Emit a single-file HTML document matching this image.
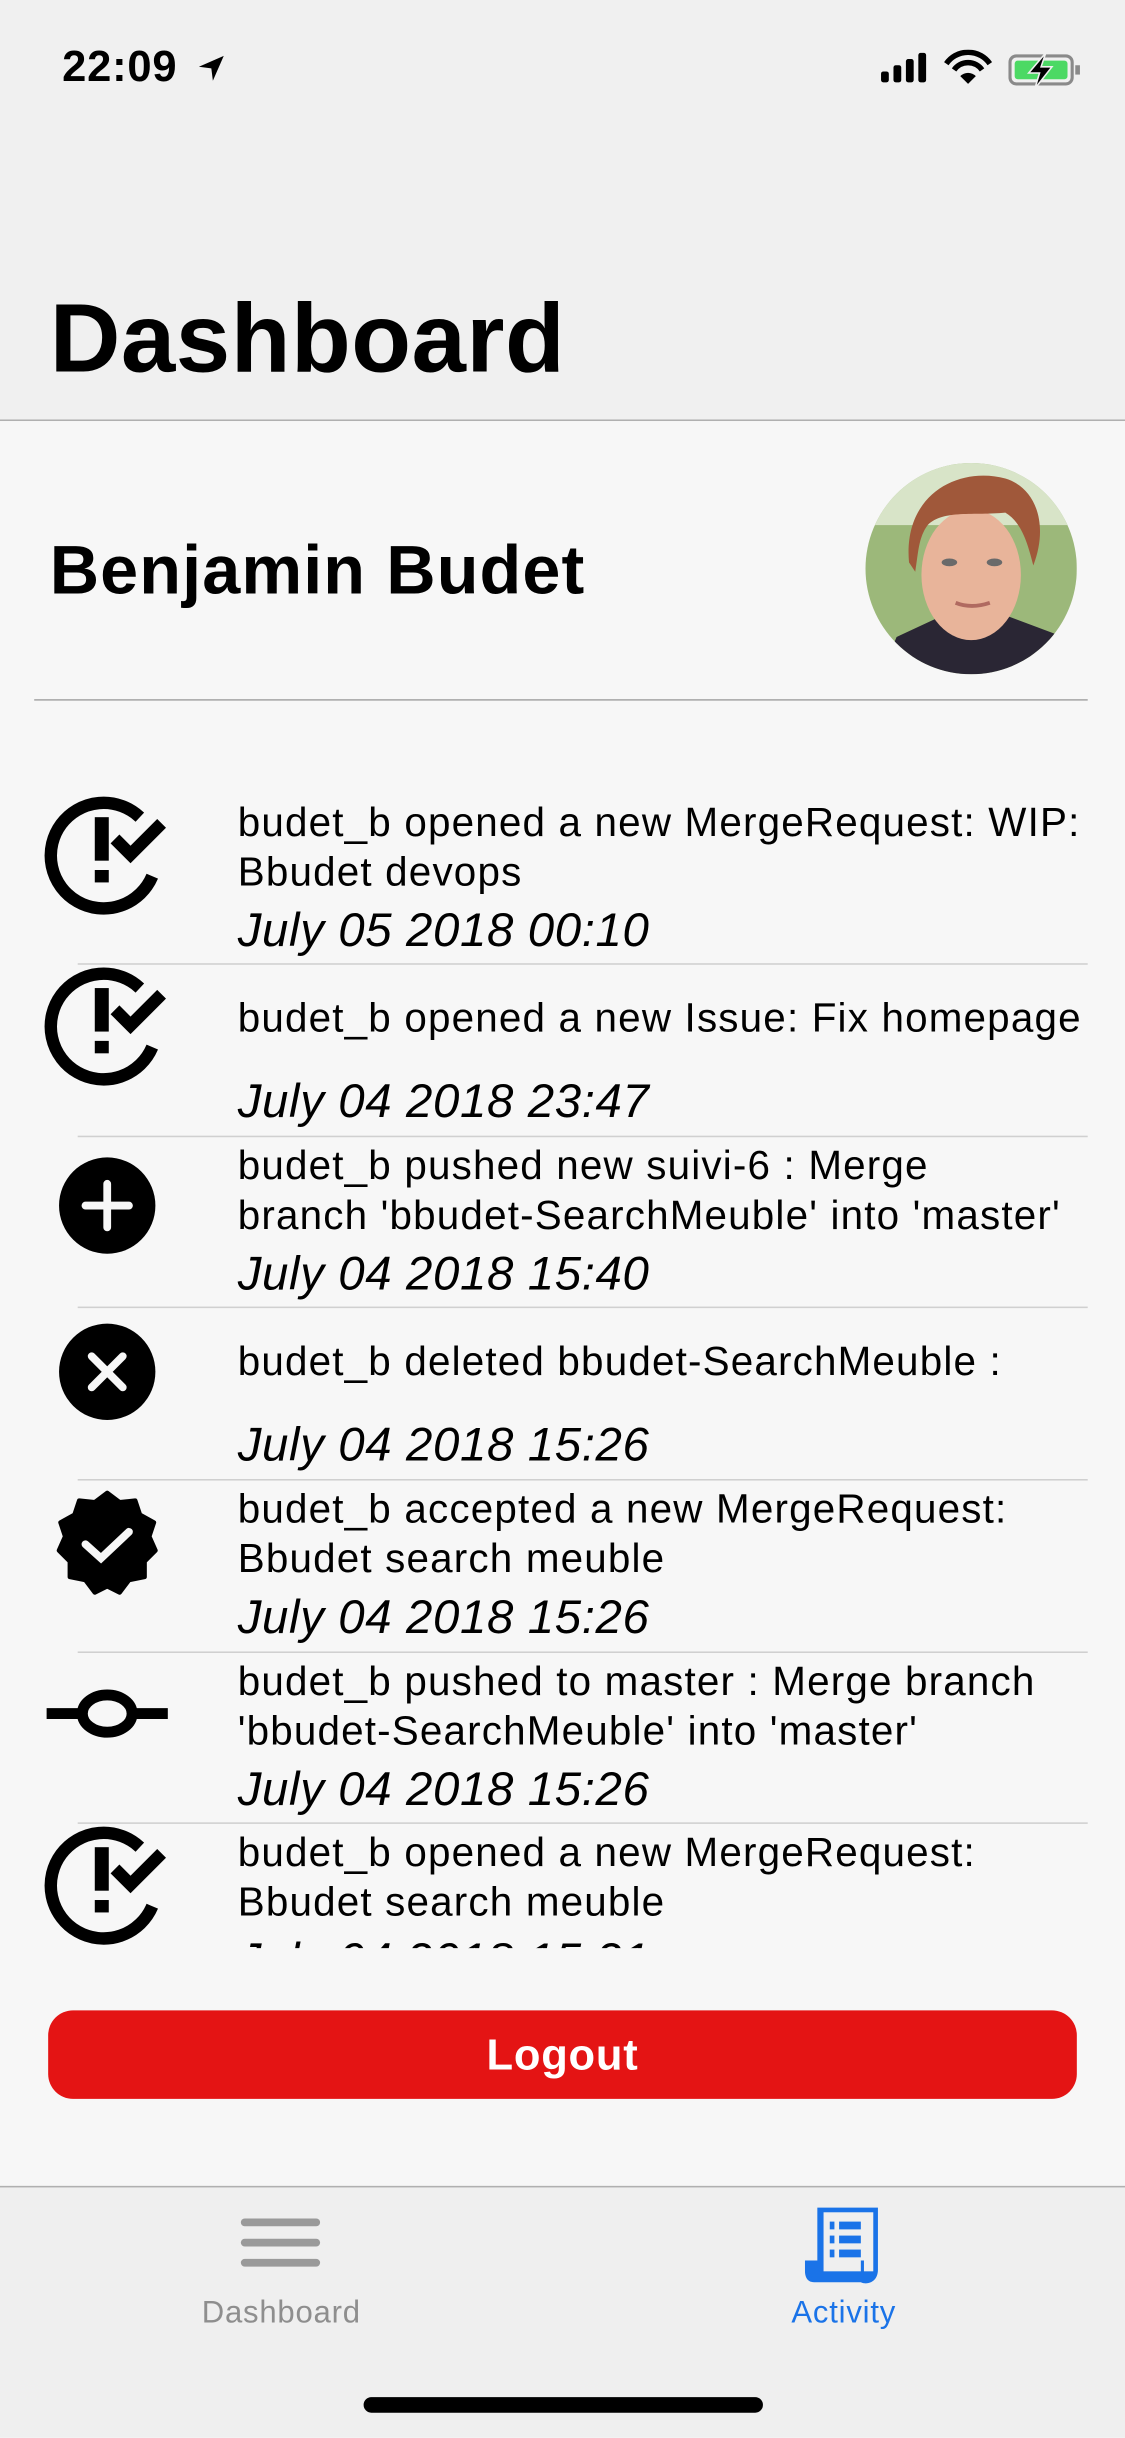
<!DOCTYPE html>
<html><head><meta charset="utf-8">
<style>
html,body{margin:0;padding:0;width:1125px;height:2436px;overflow:hidden;background:#f7f7f7}
#w{position:absolute;left:0;top:0;width:724px;height:1568px;transform:scale(1.55387,1.55357);transform-origin:0 0;font-family:"Liberation Sans",sans-serif;color:#000;background:#f7f7f7}
.abs{position:absolute}
.row{position:absolute;left:0;width:724px;height:111px}
.row .t{position:absolute;left:153px;top:1px;font-size:26px;line-height:32px;white-space:nowrap;letter-spacing:0.75px}
.row .d{position:absolute;left:153px;top:69px;font-size:30.5px;font-style:italic;line-height:36px;white-space:nowrap;letter-spacing:0.4px}
.row .sep{position:absolute;left:50px;right:24px;top:-2px;height:1px;background:#d0d0d0}
.row svg{position:absolute;left:28px;top:0}
</style></head><body>
<div id="w">
<div class="abs" style="left:0;top:0;width:724px;height:270px;background:#f0f0f0"></div>
<div class="abs" style="left:0;top:270px;width:724px;height:1px;background:#b0b0b0"></div>
<div class="abs" style="left:40px;top:27px;font-size:28px;font-weight:bold;letter-spacing:0.5px">22:09</div>
<svg class="abs" style="left:126px;top:34px" width="20" height="20" viewBox="0 0 20 20"><path d="M18 2 L2 9 L10 10 L11 18 Z" fill="#000"/></svg>
<svg class="abs" style="left:565px;top:32px" width="132" height="24" viewBox="0 0 132 24">
<rect x="2" y="14" width="5" height="7" rx="1.5"/><rect x="10" y="10" width="5" height="11" rx="1.5"/><rect x="18" y="6" width="5" height="15" rx="1.5"/><rect x="26" y="2" width="5" height="19" rx="1.5"/>
<path d="M44 9 A17 17 0 0 1 72 9" stroke="#000" stroke-width="3.5" fill="none"/><path d="M49 13 A11 11 0 0 1 67 13" stroke="#000" stroke-width="3.5" fill="none"/><path d="M53 17 L58 22 L63 17 A7 7 0 0 0 53 17Z"/>
<rect x="85" y="4" width="40" height="18" rx="4" fill="none" stroke="#8a8a8a" stroke-width="2"/><rect x="88" y="7" width="34" height="12" rx="2" fill="#4cd964"/><rect x="127" y="10" width="3" height="6" fill="#8a8a8a"/>
<path d="M108 2 L97 15 L104 15 L101 25 L112 11 L105 11 Z" fill="#000" stroke="#f0f0f0" stroke-width="1"/>
</svg>
<div class="abs" style="left:32px;top:180px;font-size:63px;font-weight:bold;line-height:76px;letter-spacing:0.3px">Dashboard</div>
<div class="abs" style="left:32px;top:342px;font-size:44px;font-weight:bold;line-height:52px;letter-spacing:0.7px">Benjamin Budet</div>
<svg class="abs" style="left:557px;top:298px" width="136" height="136" viewBox="0 0 136 136">
<defs><clipPath id="c"><circle cx="68" cy="68" r="68"/></clipPath></defs>
<g clip-path="url(#c)">
<rect width="136" height="136" fill="#9cb87a"/>
<rect x="0" y="0" width="136" height="40" fill="#d8e4c8"/>
<path d="M10 136 L20 112 L50 98 L90 98 L122 110 L136 136Z" fill="#2a2634"/>
<ellipse cx="68" cy="72" rx="32" ry="42" fill="#e8b49a"/>
<path d="M28 64 C24 20 60 2 90 10 C110 16 118 40 108 66 C104 50 100 38 90 32 C70 34 50 30 40 40 C34 48 34 58 32 70Z" fill="#a0583a"/>
<ellipse cx="54" cy="64" rx="5" ry="2.5" fill="#6a6a6a"/><ellipse cx="83" cy="64" rx="5" ry="2.5" fill="#6a6a6a"/>
<path d="M58 90 Q68 94 80 90" stroke="#b06a60" stroke-width="2.5" fill="none"/>
</g></svg>
<div class="abs" style="left:22px;top:450px;width:678px;height:1px;background:#a8a8a8"></div>

<div class="abs" style="left:0;top:500px;width:724px;height:754px;overflow:hidden">
<div class="row" style="top:12px">
<svg width="80" height="80" viewBox="0 0 80 80"><path d="M62 14 A34 34 0 1 0 70 52" stroke="#000" stroke-width="8" fill="none"/><rect x="33" y="14" width="9" height="28" /><rect x="33" y="48" width="9" height="8"/><path d="M46 28 L56 38 L76 18" stroke="#000" stroke-width="8" fill="none"/></svg>
<div class="t">budet_b opened a new MergeRequest: WIP:<br>Bbudet devops</div><div class="d">July 05 2018 00:10</div></div>

<div class="row" style="top:122px"><div class="sep"></div>
<svg width="80" height="80" viewBox="0 0 80 80"><path d="M62 14 A34 34 0 1 0 70 52" stroke="#000" stroke-width="8" fill="none"/><rect x="33" y="14" width="9" height="28" /><rect x="33" y="48" width="9" height="8"/><path d="M46 28 L56 38 L76 18" stroke="#000" stroke-width="8" fill="none"/></svg>
<div class="t" style="top:17px">budet_b opened a new Issue: Fix homepage</div><div class="d">July 04 2018 23:47</div></div>

<div class="row" style="top:233px"><div class="sep"></div>
<svg width="80" height="80" viewBox="0 0 80 80"><circle cx="41" cy="43" r="31"/><path d="M41 29 V57 M27 43 H55" stroke="#f7f7f7" stroke-width="5" stroke-linecap="round"/></svg>
<div class="t">budet_b pushed new suivi-6 : Merge<br>branch 'bbudet-SearchMeuble' into 'master'</div><div class="d">July 04 2018 15:40</div></div>

<div class="row" style="top:343px"><div class="sep"></div>
<svg width="80" height="80" viewBox="0 0 80 80"><circle cx="41" cy="40" r="31"/><path d="M31 30 L51 50 M51 30 L31 50" stroke="#f7f7f7" stroke-width="5" stroke-linecap="round"/></svg>
<div class="t" style="top:17px">budet_b deleted bbudet-SearchMeuble :</div><div class="d">July 04 2018 15:26</div></div>

<div class="row" style="top:454px"><div class="sep"></div>
<svg width="80" height="80" viewBox="0 0 80 80"><g transform="translate(41,40)"><path d="M0 -33 L8 -27 L18 -28 L21 -19 L30 -14 L27 -5 L31 4 L24 11 L24 21 L14 23 L8 31 L0 27 L-8 31 L-14 23 L-24 21 L-24 11 L-31 4 L-27 -5 L-30 -14 L-21 -19 L-18 -28 L-8 -27Z" stroke="#000" stroke-width="3" stroke-linejoin="round"/><path d="M-14 0 L-4 9 L14 -8" stroke="#f7f7f7" stroke-width="5" fill="none" stroke-linecap="round"/></g></svg>
<div class="t">budet_b accepted a new MergeRequest:<br>Bbudet search meuble</div><div class="d">July 04 2018 15:26</div></div>

<div class="row" style="top:565px"><div class="sep"></div>
<svg width="84" height="80" viewBox="0 0 84 80"><path d="M2 38 H80" stroke="#000" stroke-width="7"/><ellipse cx="41" cy="38" rx="16" ry="12" fill="#f7f7f7" stroke="#000" stroke-width="7"/></svg>
<div class="t">budet_b pushed to master : Merge branch<br>'bbudet-SearchMeuble' into 'master'</div><div class="d">July 04 2018 15:26</div></div>

<div class="row" style="top:675px"><div class="sep"></div>
<svg width="80" height="80" viewBox="0 0 80 80"><path d="M62 14 A34 34 0 1 0 70 52" stroke="#000" stroke-width="8" fill="none"/><rect x="33" y="14" width="9" height="28" /><rect x="33" y="48" width="9" height="8"/><path d="M46 28 L56 38 L76 18" stroke="#000" stroke-width="8" fill="none"/></svg>
<div class="t">budet_b opened a new MergeRequest:<br>Bbudet search meuble</div><div class="d">July 04 2018 15:21</div></div>
</div>

<div class="abs" style="left:31px;top:1294px;width:662px;height:57px;border-radius:16px;background:#e41414;color:#fff;font-weight:bold;font-size:28px;line-height:57px;text-align:center;letter-spacing:0.5px">Logout</div>

<div class="abs" style="left:0;top:1407px;width:724px;height:161px;background:#efefef;border-top:1px solid #b0b0b0"></div>
<div class="abs" style="left:155px;top:1428px;width:51px;height:5px;border-radius:3px;background:#9a9a9a"></div>
<div class="abs" style="left:155px;top:1441px;width:51px;height:5px;border-radius:3px;background:#9a9a9a"></div>
<div class="abs" style="left:155px;top:1454px;width:51px;height:5px;border-radius:3px;background:#9a9a9a"></div>
<div class="abs" style="left:0;top:1478px;width:362px;text-align:center;font-size:20px;color:#8e8e8e;letter-spacing:0.5px">Dashboard</div>
<svg class="abs" style="left:518px;top:1419px" width="50" height="52" viewBox="0 0 50 52">
<path d="M8 2 H47 V42 C47 50 40 52 36 50 L6 50 C1 50 0 46 0 42 L0 36 L8 36Z" fill="#1a73e8"/>
<rect x="12" y="5" width="32" height="38" fill="#efefef"/>
<path d="M36 36 L38 36 L38 44 C38 47 40 48 42 48 L36 48Z" fill="#1a73e8"/>
<rect x="16" y="11" width="3" height="5" fill="#1a73e8"/><rect x="22" y="11" width="14" height="5" fill="#1a73e8"/>
<rect x="16" y="20" width="3" height="5" fill="#1a73e8"/><rect x="22" y="20" width="14" height="5" fill="#1a73e8"/>
<rect x="16" y="29" width="3" height="5" fill="#1a73e8"/><rect x="22" y="29" width="14" height="5" fill="#1a73e8"/>
</svg>
<div class="abs" style="left:362px;top:1478px;width:362px;text-align:center;font-size:20px;color:#1a73e8;letter-spacing:0.5px">Activity</div>
<div class="abs" style="left:234px;top:1543px;width:257px;height:10px;border-radius:5px;background:#000"></div>
</div>
</body></html>
